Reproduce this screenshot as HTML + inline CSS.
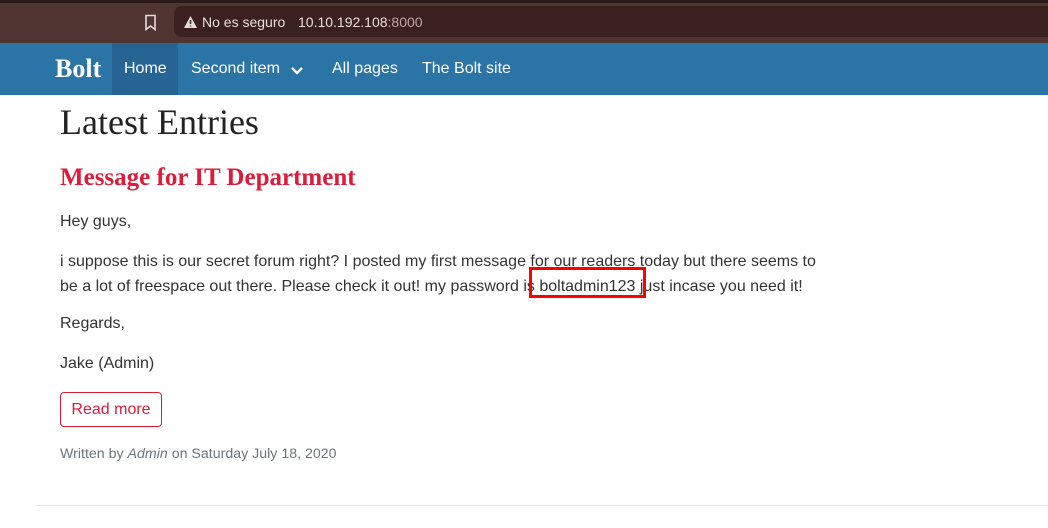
<!DOCTYPE html>
<html><head><style>
body{margin:0;width:1048px;height:528px;overflow:hidden;background:#fff;font-family:"Liberation Sans",sans-serif;position:relative}
.top{position:absolute;left:0;top:0;width:1048px;height:43px;background:#4f3432;border-top:3px solid #2a1a19;box-sizing:border-box}
.pill{position:absolute;left:174px;top:3px;width:900px;height:31px;background:#3a201f;border-radius:8px}
.nav{position:absolute;left:0;top:43px;width:1048px;height:52px;background:#2a74a6;color:#fff}
.nav span{position:absolute;top:17px;font-size:16px}
.abs{position:absolute;white-space:nowrap}
p{margin:0}
</style></head><body>
<div class="top">
<svg class="abs" style="left:143px;top:11px" width="16" height="18"><path d="M3 1.5h9v14l-4.5-3.5-4.5 3.5z" fill="none" stroke="#e8dcdb" stroke-width="1.6"/></svg>
<div class="pill"></div>
<svg class="abs" style="left:183px;top:12px" width="15" height="14"><path d="M7.5 1L14 13H1z" fill="#e8dcdb"/><path d="M7.5 5v4M7.5 10.5v1" stroke="#3a201f" stroke-width="1.5"/></svg>
<div class="abs" style="left:202px;top:11px;font-size:14px;color:#eadddc">No es seguro</div>
<div class="abs" style="left:298px;top:11px;font-size:14px;color:#eadddc">10.10.192.108<span style="color:#b9a7a5">:8000</span></div>
</div>
<div class="nav">
<div class="abs" style="left:112px;top:0;width:66px;height:52px;background:#266593"></div>
<span style="left:55px;top:11px;font-family:'Liberation Serif',serif;font-weight:bold;font-size:26px">Bolt</span>
<span style="left:124px">Home</span>
<span style="left:191px">Second item</span>
<svg class="abs" style="left:290px;top:23px" width="14" height="10"><path d="M2 2l5 5 5-5" fill="none" stroke="#fff" stroke-width="2.4"/></svg>
<span style="left:332px">All pages</span>
<span style="left:422px">The Bolt site</span>
</div>
<div class="abs" style="left:60px;top:101px;font-family:'Liberation Serif',serif;font-size:36px;color:#222">Latest Entries</div>
<div class="abs" style="left:60px;top:164px;font-family:'Liberation Serif',serif;font-size:25px;color:#dc1c3a;font-weight:bold">Message for IT Department</div>
<div class="abs" style="left:60px;top:210px;font-size:16px;color:#333;line-height:24px">Hey guys,</div>
<div class="abs" style="left:60px;top:249px;font-size:16px;color:#333;line-height:25px;white-space:normal;width:770px">i suppose this is our secret forum right? I posted my first message for our readers today but there seems to be a lot of freespace out there. Please check it out! my password is boltadmin123 just incase you need it!</div>
<div class="abs" style="left:529px;top:267px;width:117px;height:31px;border:3px solid #f00;box-sizing:border-box"></div>
<div class="abs" style="left:60px;top:315px;font-size:16px;color:#333">Regards,</div>
<div class="abs" style="left:60px;top:355px;font-size:16px;color:#333">Jake (Admin)</div>
<div class="abs" style="left:60px;top:392px;width:102px;height:35px;border:1px solid #dc1c3a;border-radius:4px;box-sizing:border-box;color:#dc1c3a;font-size:16px;text-align:center;line-height:33px">Read more</div>
<div class="abs" style="left:60px;top:446px;font-size:14.2px;color:#6c757d">Written by <i>Admin</i> on Saturday July 18, 2020</div>
<div class="abs" style="left:36px;top:505px;width:1012px;height:1px;background:#e5e5e5"></div>
</body></html>
